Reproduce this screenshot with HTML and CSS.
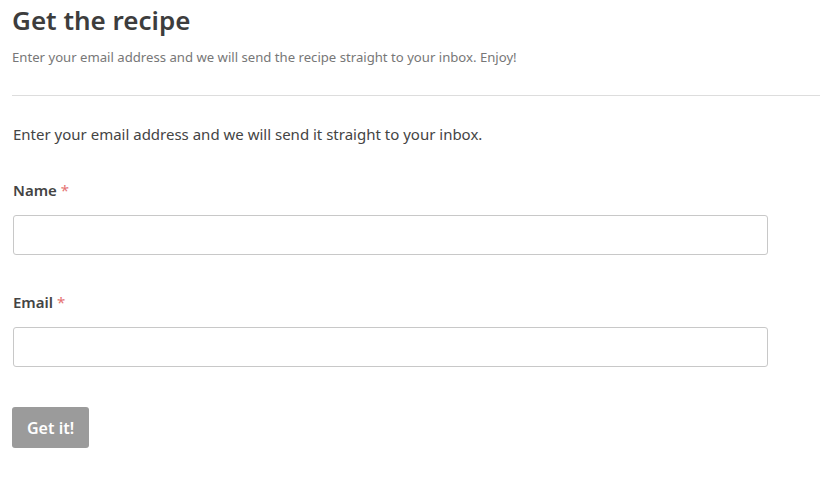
FILE: index.html
```html
<!DOCTYPE html>
<html>
<head>
<meta charset="utf-8">
<link rel="stylesheet" href="styles.css">
</head>
<body>
<div class="page">
  <header class="head">
    <h2 class="title">Get the recipe</h2>
    <p class="sub">Enter your email address and we will send the recipe straight to your inbox. Enjoy!</p>
  </header>
  <form class="form">
    <p class="intro">Enter your email address and we will send it straight to your inbox.</p>
    <div class="field">
      <label class="label">Name <span class="req">*</span></label>
      <input class="input" type="text">
    </div>
    <div class="field">
      <label class="label">Email <span class="req">*</span></label>
      <input class="input" type="email">
    </div>
    <button class="btn" type="button">Get it!</button>
  </form>
</div>
</body>
</html>
```
FILE: styles.css
```css
html, body { margin: 0; padding: 0; background: #fff; }
body { font-family: "Noto Sans", "Open Sans", sans-serif; color: #444; }
.page { padding: 0 0 0 12px; }
.head { border-bottom: 1px solid #ddd; padding-bottom: 29px; }
.title { margin: 0; padding-top: 2px; font-size: 26px; line-height: 36px; font-weight: 600; color: #3d3d3d; }
.sub { margin: 10px 0 0; font-size: 13.15px; line-height: 18px; color: #777; }
.form { padding-left: 1px; }
.intro { margin: 27px 0 0; font-size: 15px; line-height: 22px; color: #444; }
.field { display: flex; flex-direction: column; margin-top: 35px; width: 755px; }
.field + .field { margin-top: 37px; }
.label { font-size: 15px; font-weight: 600; line-height: 20px; color: #444; margin-bottom: 15px; }
.req { color: #e57373; font-weight: 400; }
.input { box-sizing: border-box; height: 40px; border: 1px solid #c8c8c8; border-radius: 3px; background: #fff; width: 100%; margin: 0; }
.btn { display: block; margin-top: 40px; margin-left: -1px; height: 41px; padding: 0 15px; background: #9b9b9b; color: #fff; border: 0; border-radius: 3px; font-family: inherit; font-size: 16px; font-weight: 600; }
```
